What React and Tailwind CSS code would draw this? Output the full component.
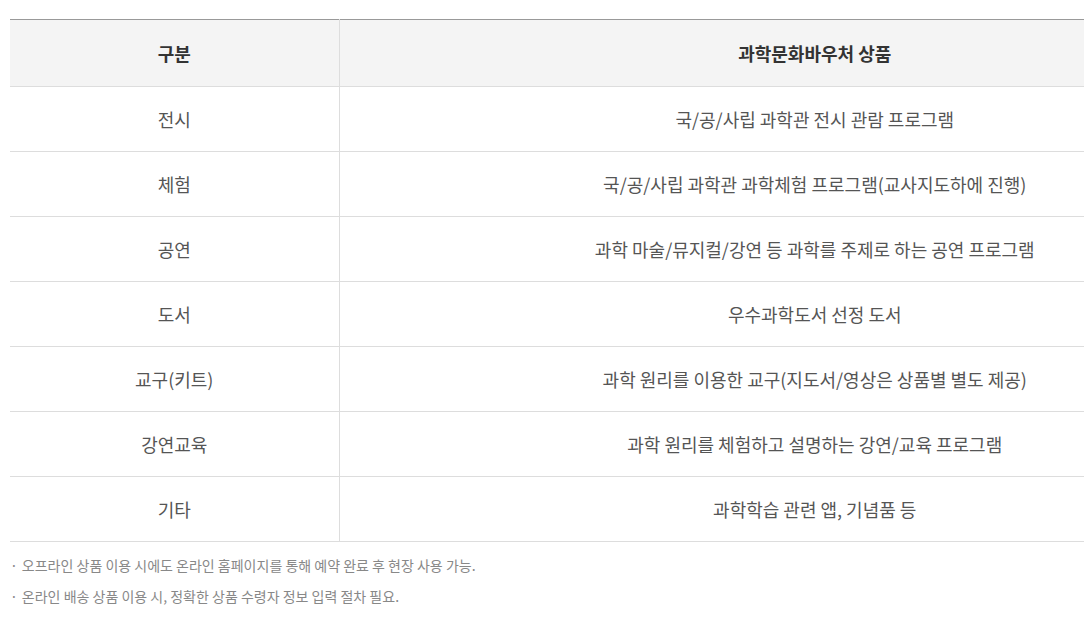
import React from 'react';

const rows = [
  ['전시', '국/공/사립 과학관 전시 관람 프로그램'],
  ['체험', '국/공/사립 과학관 과학체험 프로그램(교사지도하에 진행)'],
  ['공연', '과학 마술/뮤지컬/강연 등 과학를 주제로 하는 공연 프로그램'],
  ['도서', '우수과학도서 선정 도서'],
  ['교구(키트)', '과학 원리를 이용한 교구(지도서/영상은 상품별 별도 제공)'],
  ['강연교육', '과학 원리를 체험하고 설명하는 강연/교육 프로그램'],
  ['기타', '과학학습 관련 앱, 기념품 등'],
];

const notes = [
  '오프라인 상품 이용 시에도 온라인 홈페이지를 통해 예약 완료 후 현장 사용 가능.',
  '온라인 배송 상품 이용 시, 정확한 상품 수령자 정보 입력 절차 필요.',
];

const App = () => {
  return (
    <div className="w-full min-h-screen bg-white overflow-hidden font-['Noto_Sans_CJK_KR','Noto_Sans',sans-serif]">
      <div className="pl-[10px] pt-[19px]">
        <table className="w-[1280px] border-collapse table-fixed border-t border-[#999]">
          <colgroup>
            <col className="w-[329px]" />
            <col />
          </colgroup>
          <thead>
            <tr className="h-[67px] bg-[#f4f4f4] border-b border-[#ddd]">
              <th className="text-[18px] font-bold text-[#333] border-r border-[#ddd]">구분</th>
              <th className="text-[18px] font-bold text-[#333]">과학문화바우처 상품</th>
            </tr>
          </thead>
          <tbody>
            {rows.map(([kind, item]) => (
              <tr key={kind} className="h-[65px] border-b border-[#ddd]">
                <td className="text-center text-[18px] text-[#555] border-r border-[#ddd]">{kind}</td>
                <td className="text-center text-[18px] text-[#555]">{item}</td>
              </tr>
            ))}
          </tbody>
        </table>
        <ul className="mt-[13px] flex flex-col gap-[11px]">
          {notes.map((n) => (
            <li key={n} className="flex gap-[4px] text-[14px] leading-[20px] text-[#888]">
              <span>·</span>
              <span>{n}</span>
            </li>
          ))}
        </ul>
      </div>
    </div>
  );
};

export default App;
